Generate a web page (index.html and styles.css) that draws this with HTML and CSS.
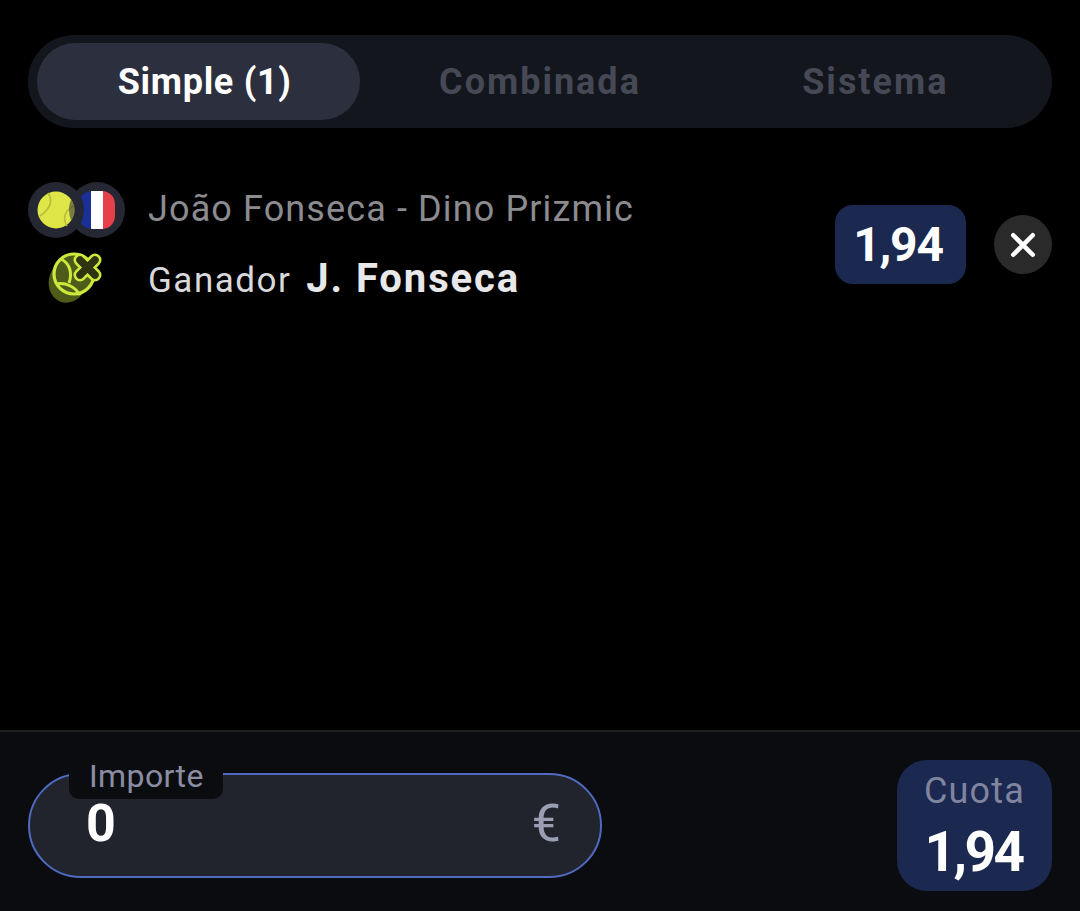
FILE: index.html
```html
<!DOCTYPE html>
<html lang="es">
<head>
<meta charset="utf-8">
<title>Boleto</title>
<link rel="stylesheet" href="styles.css">
</head>
<body>
<main class="page">
  <nav class="tabs">
    <div class="tab tab-active"><span>Simple (1)</span></div>
    <div class="tab"><span>Combinada</span></div>
    <div class="tab"><span>Sistema</span></div>
  </nav>
  <section class="bet">
    <div class="icons">
      <div class="badges">
        <span class="badge badge-ball">
          <svg viewBox="0 0 38 38" width="38" height="38"><defs><clipPath id="ballclip"><circle cx="19" cy="19" r="18.5"/></clipPath></defs><circle cx="19" cy="19" r="18.5" fill="#dfe648"/><path d="M11 2C16 9 14 17 3 25" fill="none" stroke="#b7bc3a" stroke-width="1.6"/><path d="M37 15C28 19 25 27 30 35" fill="none" stroke="#b7bc3a" stroke-width="1.6"/><circle cx="60" cy="19" r="28" fill="#252733" opacity=".55" clip-path="url(#ballclip)"/></svg>
        </span>
        <span class="badge badge-flag">
          <svg viewBox="0 0 38 38" width="38" height="38"><defs><clipPath id="flagclip"><rect x="1" y="0" width="36" height="38" rx="13"/></clipPath></defs><g clip-path="url(#flagclip)"><rect x="1" width="12" height="38" fill="#1a2f97"/><rect x="13" width="12" height="38" fill="#fff"/><rect x="25" width="12" height="38" fill="#e5404a"/></g></svg>
        </span>
      </div>
      <svg class="ball-x" viewBox="0 0 54 54" width="54" height="54">
        <ellipse cx="20" cy="31" rx="19" ry="22" fill="#4e5c1a" transform="rotate(20 20 31)"/>
        <circle cx="26" cy="24" r="20" fill="#4e5c1a" stroke="#cdea3c" stroke-width="3.2"/>
        <path d="M13 9C21 13 25 22 21 33M8 34C18 32 27 37 32 45" fill="none" stroke="#cdea3c" stroke-width="3"/>
        <path d="M32 10 47 25M47 10 32 25" stroke="#cdea3c" stroke-width="13" stroke-linecap="round"/>
        <path d="M32 10 47 25M47 10 32 25" stroke="#2f3312" stroke-width="7.5" stroke-linecap="round"/>
      </svg>
    </div>
    <div class="info">
      <div class="match">João Fonseca - Dino Prizmic</div>
      <div class="pick"><span class="market">Ganador</span><span class="selection">J. Fonseca</span></div>
    </div>
    <div class="odds">1,94</div>
    <button class="close" type="button" aria-label="Cerrar">
      <svg viewBox="0 0 24 24" width="26" height="26"><path d="M3 3 21 21M21 3 3 21" stroke="#fff" stroke-width="4.2" stroke-linecap="round"/></svg>
    </button>
  </section>
  <footer class="footer">
    <div class="amount">
      <span class="amount-label">Importe</span>
      <span class="amount-value">0</span>
      <span class="amount-currency">€</span>
    </div>
    <div class="total">
      <span class="total-label">Cuota</span>
      <span class="total-value">1,94</span>
    </div>
  </footer>
</main>
</body>
</html>
```
FILE: styles.css
```css
* { box-sizing: border-box; }
html, body { margin: 0; height: 100%; background: #000; }
body { font-family: Roboto, "Noto Sans", sans-serif; color: #fff; overflow: hidden; }
.page { display: flex; flex-direction: column; height: 911px; width: 1080px; }

.tabs {
  display: grid; grid-template-columns: repeat(3, 1fr);
  margin: 35px 28px 0; height: 93px; padding: 8px 9px;
  border-radius: 46px; background: #14161d;
}
.tab {
  position: relative; display: flex; align-items: center; justify-content: center;
  font-size: 36px; font-weight: 700; letter-spacing: 2px; color: #454855;
}
.tab span { position: relative; }
.tab-active { color: #fff; letter-spacing: 0.7px; }
.tab-active::before {
  content: ""; position: absolute; left: 0; top: 0; bottom: 0; width: 323px;
  border-radius: 38px; background: #2c2f3d;
}

.bet { display: flex; align-items: flex-start; margin: 54px 28px 0; }
.icons { width: 120px; display: flex; flex-direction: column; align-items: flex-start; flex: none; }
.badges { display: flex; }
.badge {
  width: 56px; height: 56px; border-radius: 50%; background: #252733;
  display: flex; align-items: center; justify-content: center; flex: none;
}
.badge-ball { position: relative; z-index: 1; }
.badge-flag { margin-left: -15px; }
.ball-x { margin: 12px 0 0 20px; }
.info { flex: 1; padding-top: 4px; }
.match { font-size: 36px; line-height: 46px; color: #8b8b90; letter-spacing: 1.12px; }
.pick { display: flex; align-items: baseline; gap: 15px; margin-top: 24px; line-height: 46px; }
.market { font-size: 35px; color: #d9d9dc; letter-spacing: 1.5px; }
.selection { font-size: 40px; font-weight: 700; color: #e8e8ea; letter-spacing: 1.9px; }
.odds {
  margin-top: 23px; width: 131px; height: 79px; border-radius: 18px; background: #1b2850;
  display: flex; align-items: center; justify-content: center; padding-right: 5px;
  font-size: 48px; font-weight: 700; letter-spacing: -1.2px; flex: none;
}
.close {
  margin: 33px 0 0 28px; width: 58px; height: 59px; border: 0; padding: 0; border-radius: 50%;
  background: #2a2a2a; display: flex; align-items: center; justify-content: center; flex: none;
}

.footer {
  margin-top: auto; height: 181px; border-top: 2px solid #1f2022; background: #0b0c10;
  padding: 28px 28px 19px; display: flex; justify-content: space-between; align-items: flex-start;
}
.amount {
  position: relative; width: 574px; height: 105px; margin-top: 13px;
  border: 2px solid #4f6abf; border-radius: 53px; background: #21232d;
  display: flex; align-items: center; justify-content: space-between; padding: 0 39px 4px 56px;
}
.amount-label {
  position: absolute; left: 39px; top: -10px; width: 154px; height: 34px; padding-left: 20px;
  background: #0b0c10; border-radius: 0 0 10px 10px;
  font-size: 32px; line-height: 22px; color: #8b8ea3; letter-spacing: 0.4px;
}
.amount-value { font-size: 52px; font-weight: 700; }
.amount-currency { font-size: 52px; color: #9a9eb2; }
.total {
  width: 155px; height: 131px; border-radius: 30px; background: #1b2850;
  display: flex; flex-direction: column; align-items: center; padding-top: 8px;
}
.total-label { font-size: 36px; line-height: 46px; color: #80859f; letter-spacing: 1.2px; }
.total-value { font-size: 55px; font-weight: 700; line-height: 66px; letter-spacing: -2.5px; margin-top: 5px; padding-right: 2px; }
```
